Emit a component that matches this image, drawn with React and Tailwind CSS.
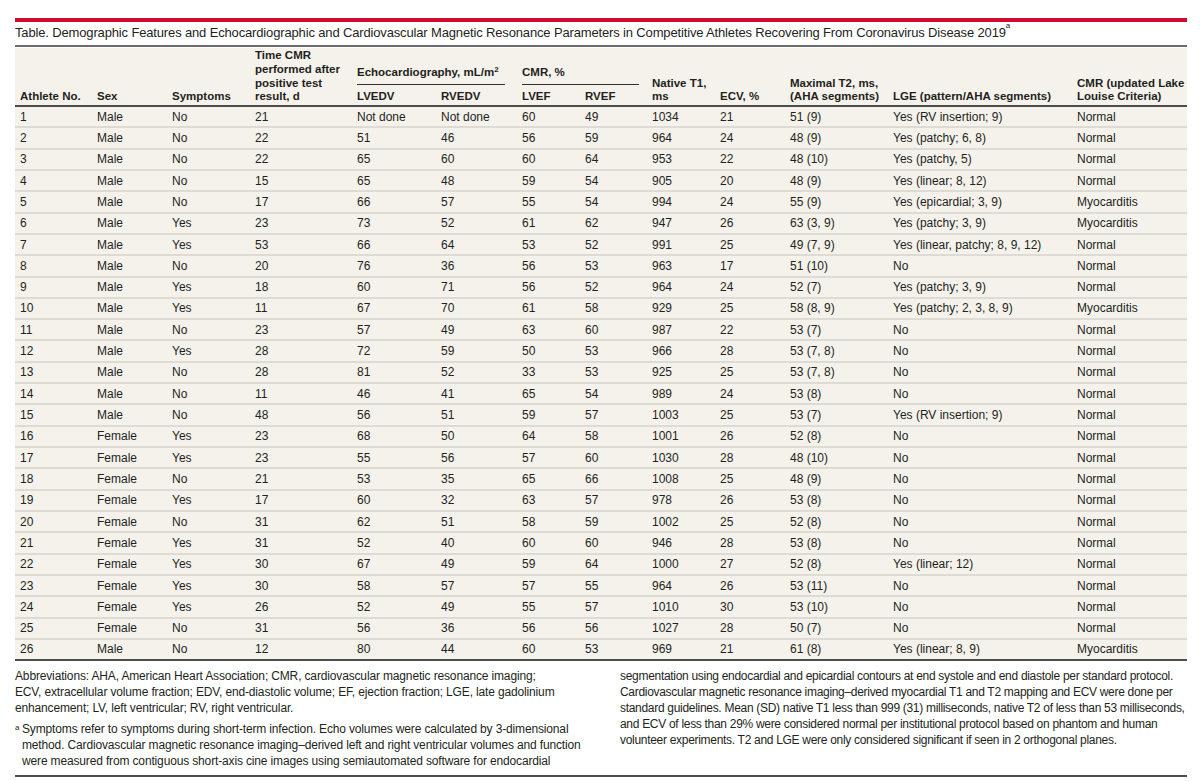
import React from "react";

const rows = [
  ["1","Male","No","21","Not done","Not done","60","49","1034","21","51 (9)","Yes (RV insertion; 9)","Normal"],
  ["2","Male","No","22","51","46","56","59","964","24","48 (9)","Yes (patchy; 6, 8)","Normal"],
  ["3","Male","No","22","65","60","60","64","953","22","48 (10)","Yes (patchy, 5)","Normal"],
  ["4","Male","No","15","65","48","59","54","905","20","48 (9)","Yes (linear; 8, 12)","Normal"],
  ["5","Male","No","17","66","57","55","54","994","24","55 (9)","Yes (epicardial; 3, 9)","Myocarditis"],
  ["6","Male","Yes","23","73","52","61","62","947","26","63 (3, 9)","Yes (patchy; 3, 9)","Myocarditis"],
  ["7","Male","Yes","53","66","64","53","52","991","25","49 (7, 9)","Yes (linear, patchy; 8, 9, 12)","Normal"],
  ["8","Male","No","20","76","36","56","53","963","17","51 (10)","No","Normal"],
  ["9","Male","Yes","18","60","71","56","52","964","24","52 (7)","Yes (patchy; 3, 9)","Normal"],
  ["10","Male","Yes","11","67","70","61","58","929","25","58 (8, 9)","Yes (patchy; 2, 3, 8, 9)","Myocarditis"],
  ["11","Male","No","23","57","49","63","60","987","22","53 (7)","No","Normal"],
  ["12","Male","Yes","28","72","59","50","53","966","28","53 (7, 8)","No","Normal"],
  ["13","Male","No","28","81","52","33","53","925","25","53 (7, 8)","No","Normal"],
  ["14","Male","No","11","46","41","65","54","989","24","53 (8)","No","Normal"],
  ["15","Male","No","48","56","51","59","57","1003","25","53 (7)","Yes (RV insertion; 9)","Normal"],
  ["16","Female","Yes","23","68","50","64","58","1001","26","52 (8)","No","Normal"],
  ["17","Female","Yes","23","55","56","57","60","1030","28","48 (10)","No","Normal"],
  ["18","Female","No","21","53","35","65","66","1008","25","48 (9)","No","Normal"],
  ["19","Female","Yes","17","60","32","63","57","978","26","53 (8)","No","Normal"],
  ["20","Female","No","31","62","51","58","59","1002","25","52 (8)","No","Normal"],
  ["21","Female","Yes","31","52","40","60","60","946","28","53 (8)","No","Normal"],
  ["22","Female","Yes","30","67","49","59","64","1000","27","52 (8)","Yes (linear; 12)","Normal"],
  ["23","Female","Yes","30","58","57","57","55","964","26","53 (11)","No","Normal"],
  ["24","Female","Yes","26","52","49","55","57","1010","30","53 (10)","No","Normal"],
  ["25","Female","No","31","56","36","56","56","1027","28","50 (7)","No","Normal"],
  ["26","Male","No","12","80","44","60","53","969","21","61 (8)","Yes (linear; 8, 9)","Myocarditis"],
];

const cols =
  "grid grid-cols-[77px_75px_83px_102px_84px_81px_63px_67px_68px_70px_103px_184px_115px]";

function HeadCell({ children }) {
  return <div className="pl-[5px] leading-[13.7px]">{children}</div>;
}

export default function App() {
  return (
    <div
      className="w-[1200px] h-[781px] bg-white overflow-hidden text-[#231f20]"
      style={{ fontFamily: '"Liberation Sans", Arial, sans-serif' }}
    >
      <div className="pl-[15px] pr-[13px] pt-[18px]">
        <div className="h-[4px] bg-[#cf0a30]" />
        <div className="pt-[3px] pb-[4px] border-b-2 border-[#6b6b6b] text-[13px] leading-[16px] tracking-[-0.15px] whitespace-nowrap">
          Table. Demographic Features and Echocardiographic and Cardiovascular Magnetic Resonance
          Parameters in Competitive Athletes Recovering From Coronavirus Disease 2019
          <sup className="text-[8px] align-super">a</sup>
        </div>

        <div className="mt-[1px] bg-[#f5f2ec]">
          {/* header */}
          <div
            className={`${cols} items-end h-[59px] border-b-2 border-[#4d4d4d] font-bold text-[11.5px] pb-[1px] whitespace-nowrap`}
          >
            <HeadCell>Athlete No.</HeadCell>
            <HeadCell>Sex</HeadCell>
            <HeadCell>Symptoms</HeadCell>
            <HeadCell>
              Time CMR
              <br />
              performed after
              <br />
              positive test
              <br />
              result, d
            </HeadCell>
            <div className="col-span-2 flex flex-col">
              <div className="ml-[5px] mr-[12px] pb-[5px] border-b border-[#333] leading-[13.7px]">
                Echocardiography, mL/m<sup className="text-[8px]">2</sup>
              </div>
              <div className="grid grid-cols-[84px_81px] pt-[5px]">
                <HeadCell>LVEDV</HeadCell>
                <HeadCell>RVEDV</HeadCell>
              </div>
            </div>
            <div className="col-span-2 flex flex-col">
              <div className="ml-[5px] mr-[8px] pb-[5px] border-b border-[#333] leading-[13.7px]">
                CMR, %
              </div>
              <div className="grid grid-cols-[63px_67px] pt-[5px]">
                <HeadCell>LVEF</HeadCell>
                <HeadCell>RVEF</HeadCell>
              </div>
            </div>
            <HeadCell>
              Native T1,
              <br />
              ms
            </HeadCell>
            <HeadCell>ECV, %</HeadCell>
            <HeadCell>
              Maximal T2, ms,
              <br />
              (AHA segments)
            </HeadCell>
            <HeadCell>LGE (pattern/AHA segments)</HeadCell>
            <HeadCell>
              CMR (updated Lake
              <br />
              Louise Criteria)
            </HeadCell>
          </div>

          {/* body */}
          {rows.map((r, i) => (
            <div
              key={i}
              className={`${cols} items-center h-[21.32px] border-b-2 text-[12px] whitespace-nowrap ${
                i === rows.length - 1 ? "border-[#4d4d4d]" : "border-[#dedbd4]"
              }`}
            >
              {r.map((c, j) => (
                <div key={j} className="pl-[5px] leading-[14px]">
                  {c}
                </div>
              ))}
            </div>
          ))}
        </div>

        {/* footer */}
        <div className="grid grid-cols-[572px_567px] gap-x-[33px] pt-[7px] pb-[6px] border-b-2 border-[#4d4d4d] text-[12px] leading-[16px] whitespace-nowrap">
          <div className="tracking-[-0.15px]">
            <div>Abbreviations: AHA, American Heart Association; CMR, cardiovascular magnetic resonance imaging;</div>
            <div>ECV, extracellular volume fraction; EDV, end-diastolic volume; EF, ejection fraction; LGE, late gadolinium</div>
            <div>enhancement; LV, left ventricular; RV, right ventricular.</div>
            <div className="mt-[5px] relative pl-[7px]">
              <sup className="absolute left-0 top-[3px] text-[8px] leading-none">a</sup>
              <div>Symptoms refer to symptoms during short-term infection. Echo volumes were calculated by 3-dimensional</div>
              <div>method. Cardiovascular magnetic resonance imaging–derived left and right ventricular volumes and function</div>
              <div>were measured from contiguous short-axis cine images using semiautomated software for endocardial</div>
            </div>
          </div>
          <div className="tracking-[-0.3px]">
            <div>segmentation using endocardial and epicardial contours at end systole and end diastole per standard protocol.</div>
            <div>Cardiovascular magnetic resonance imaging–derived myocardial T1 and T2 mapping and ECV were done per</div>
            <div>standard guidelines. Mean (SD) native T1 less than 999 (31) milliseconds, native T2 of less than 53 milliseconds,</div>
            <div>and ECV of less than 29% were considered normal per institutional protocol based on phantom and human</div>
            <div>volunteer experiments. T2 and LGE were only considered significant if seen in 2 orthogonal planes.</div>
          </div>
        </div>
      </div>
    </div>
  );
}
